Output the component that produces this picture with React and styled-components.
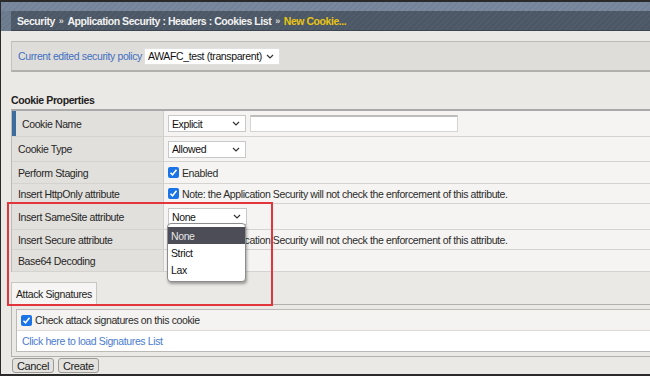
import React from 'react'
import styled, { createGlobalStyle } from 'styled-components'

const GlobalStyle = createGlobalStyle`
  html, body {
    margin: 0;
    padding: 0;
    background: #2a2a2a;
  }
  body {
    font-family: "Liberation Sans", Arial, sans-serif;
    font-size: 10.5px;
    letter-spacing: -0.38px;
    color: #2b2b2b;
  }
`

const Frame = styled.div`
  position: relative;
  width: 649px;
  height: 372px;
  margin: 2px 0 0 1px;
  background: #ebe9e5;
  overflow: hidden;
`

const TopStripe = styled.div`
  height: 9px;
  background: repeating-linear-gradient(135deg, #7a899b 0 2px, #74839a 2px 4px);
`

const HeaderRow = styled.div`
  display: flex;
  height: 20px;
  background: repeating-linear-gradient(135deg, #6f7e90 0 2px, #6a798b 2px 4px);
`

const Breadcrumb = styled.div`
  flex: 1;
  margin-left: 10px;
  display: flex;
  align-items: center;
  gap: 2px;
  padding-left: 6px;
  background: repeating-linear-gradient(135deg, #505c69 0 2px, #4b5764 2px 4px);
  border-bottom: 1px solid #3d4650;
  color: #f2f2f2;
  font-weight: bold;
  letter-spacing: -0.45px;
`

const Sep = styled.span`
  font-size: 9px;
  color: #d8d8d8;
  padding: 1px 2px 0;
`

const Current = styled.span`
  color: #e8c414;
`

const Content = styled.div`
  padding-left: 10px;
`

const PolicyBar = styled.div`
  margin-top: 10px;
  height: 28px;
  display: flex;
  align-items: center;
  gap: 2px;
  padding-left: 6px;
  background: #dfddd9;
  border-top: 1px solid #bdbbb7;
  border-left: 1px solid #c4c2be;
  border-bottom: 2px solid #b2b0ac;
`

const PolicyLabel = styled.span`
  color: #3f6fc2;
`

const Select = styled.div`
  box-sizing: border-box;
  display: flex;
  align-items: center;
  justify-content: space-between;
  width: ${p => p.$w}px;
  height: 17px;
  padding: 0 5px 0 3px;
  background: #fff;
  border: 1px solid ${p => (p.$plain ? '#e0e0e0' : '#c8c8c8')};
  color: #111;
`

const Chevron = () => (
  <svg width="8" height="5" viewBox="0 0 8 5">
    <path d="M1 1l3 3 3-3" fill="none" stroke="#333" strokeWidth="1.2" />
  </svg>
)

const SectionTitle = styled.div`
  margin-top: 22px;
  height: 15px;
  font-weight: bold;
  color: #222;
`

const Table = styled.div`
  border-top: 2px solid #a9a9a9;
  border-left: 1px solid #bdbbb7;
`

const Row = styled.div`
  display: flex;
  height: ${p => p.$h}px;
  border-bottom: 1px solid #d5d3cf;
`

const Label = styled.div`
  box-sizing: border-box;
  width: 152px;
  display: flex;
  align-items: center;
  background: #e2e0dc;
  border-right: 1px solid #cfcdc9;
  border-left: ${p => (p.$active ? '4px solid #3d6d9c' : '0')};
  padding-left: 6px;
  color: #262626;
`

const Value = styled.div`
  flex: 1;
  display: flex;
  align-items: center;
  gap: 4px;
  padding-left: 4px;
  background: #f5f4f2;
`

const TextInput = styled.div`
  box-sizing: border-box;
  width: 208px;
  height: 17px;
  background: #fff;
  border: 1px solid #d4d4d4;
  border-top: 2px solid #bdbdbd;
`

const Check = styled.span`
  box-sizing: border-box;
  width: 11px;
  height: 11px;
  border-radius: 2px;
  background: #1b73e8;
  display: inline-flex;
  align-items: center;
  justify-content: center;
  flex: none;
`

const CheckMark = () => (
  <Check>
    <svg width="9" height="9" viewBox="0 0 9 9">
      <path d="M1.5 4.8l2 2 4-5" fill="none" stroke="#fff" strokeWidth="1.6" />
    </svg>
  </Check>
)

const CheckText = styled.span`
  margin-left: -1px;
`

const TabStrip = styled.div`
  height: 32px;
  display: flex;
  align-items: flex-end;
`

const Tab = styled.div`
  box-sizing: border-box;
  height: 22px;
  width: 86px;
  display: flex;
  align-items: center;
  padding-left: 4px;
  background: #f6f5f3;
  border: 1px solid #c9c7c3;
  border-bottom: none;
  color: #222;
`

const TabPanel = styled.div`
  border-top: 1px solid #b3b1ad;
  border-left: 1px solid #b3b1ad;
  border-bottom: 1px solid #b3b1ad;
  padding: 4px 0 4px 4px;
`

const SigBox = styled.div`
  border: 1px solid #bcbab6;
  border-right: none;
`

const SigRow = styled.div`
  height: 20px;
  display: flex;
  align-items: center;
  gap: 4px;
  padding-left: 4px;
  background: ${p => (p.$white ? '#fff' : '#f4f3f1')};
  border-top: ${p => (p.$white ? '1px solid #dcdad6' : 'none')};
`

const Link = styled.span`
  color: #4a7ccf;
  padding-left: 1px;
`

const Buttons = styled.div`
  display: flex;
  gap: 4px;
  margin-top: 1px;
  padding-left: 1px;
`

const Button = styled.div`
  box-sizing: border-box;
  height: 15px;
  padding: 0 4px;
  display: flex;
  align-items: center;
  background: #e4e2de;
  border: 1px solid #9c9a96;
  border-radius: 3px;
  font-size: 11px;
  color: #222;
`

const Highlight = styled.div`
  position: absolute;
  left: 6px;
  top: 200px;
  width: 262px;
  height: 100px;
  border: 2px solid #e2353c;
  pointer-events: none;
`

const Popup = styled.div`
  position: absolute;
  left: 166px;
  top: 221px;
  width: 79px;
  box-sizing: border-box;
  padding: 3px 0 3px;
  background: #fff;
  border: 1px solid #8d8d8d;
  border-radius: 4px;
  box-shadow: 1px 2px 3px rgba(0, 0, 0, 0.35);
`

const Option = styled.div`
  height: 17px;
  display: flex;
  align-items: center;
  padding-left: 3px;
  background: ${p => (p.$selected ? '#4c4d57' : 'transparent')};
  color: ${p => (p.$selected ? '#e6e6e6' : '#111')};
`

const NOTE = 'Note: the Application Security will not check the enforcement of this attribute.'

const App = () => {
  return (
    <Frame>
      <GlobalStyle />
      <TopStripe />
      <HeaderRow>
        <Breadcrumb>
          <span>Security</span>
          <Sep>»</Sep>
          <span>Application Security : Headers : Cookies List</span>
          <Sep>»</Sep>
          <Current>New Cookie...</Current>
        </Breadcrumb>
      </HeaderRow>
      <Content>
        <PolicyBar>
          <PolicyLabel>Current edited security policy</PolicyLabel>
          <Select $w={136} $plain>
            <span>AWAFC_test (transparent)</span>
            <Chevron />
          </Select>
        </PolicyBar>
        <SectionTitle>Cookie Properties</SectionTitle>
        <Table>
          <Row $h={25}>
            <Label $active>Cookie Name</Label>
            <Value>
              <Select $w={78}>
                <span>Explicit</span>
                <Chevron />
              </Select>
              <TextInput />
            </Value>
          </Row>
          <Row $h={24}>
            <Label>Cookie Type</Label>
            <Value>
              <Select $w={78}>
                <span>Allowed</span>
                <Chevron />
              </Select>
            </Value>
          </Row>
          <Row $h={21}>
            <Label>Perform Staging</Label>
            <Value>
              <CheckMark />
              <CheckText>Enabled</CheckText>
            </Value>
          </Row>
          <Row $h={19}>
            <Label>Insert HttpOnly attribute</Label>
            <Value>
              <CheckMark />
              <CheckText>{NOTE}</CheckText>
            </Value>
          </Row>
          <Row $h={25}>
            <Label>Insert SameSite attribute</Label>
            <Value>
              <Select $w={79}>
                <span>None</span>
                <Chevron />
              </Select>
            </Value>
          </Row>
          <Row $h={19}>
            <Label>Insert Secure attribute</Label>
            <Value>
              <CheckMark />
              <CheckText>{NOTE}</CheckText>
            </Value>
          </Row>
          <Row $h={21}>
            <Label>Base64 Decoding</Label>
            <Value />
          </Row>
        </Table>
        <TabStrip>
          <Tab>Attack Signatures</Tab>
        </TabStrip>
        <TabPanel>
          <SigBox>
            <SigRow>
              <CheckMark />
              <CheckText>Check attack signatures on this cookie</CheckText>
            </SigRow>
            <SigRow $white>
              <Link>Click here to load Signatures List</Link>
            </SigRow>
          </SigBox>
        </TabPanel>
        <Buttons>
          <Button>Cancel</Button>
          <Button>Create</Button>
        </Buttons>
      </Content>
      <Highlight />
      <Popup>
        <Option $selected>None</Option>
        <Option>Strict</Option>
        <Option>Lax</Option>
      </Popup>
    </Frame>
  )
}

export default App
